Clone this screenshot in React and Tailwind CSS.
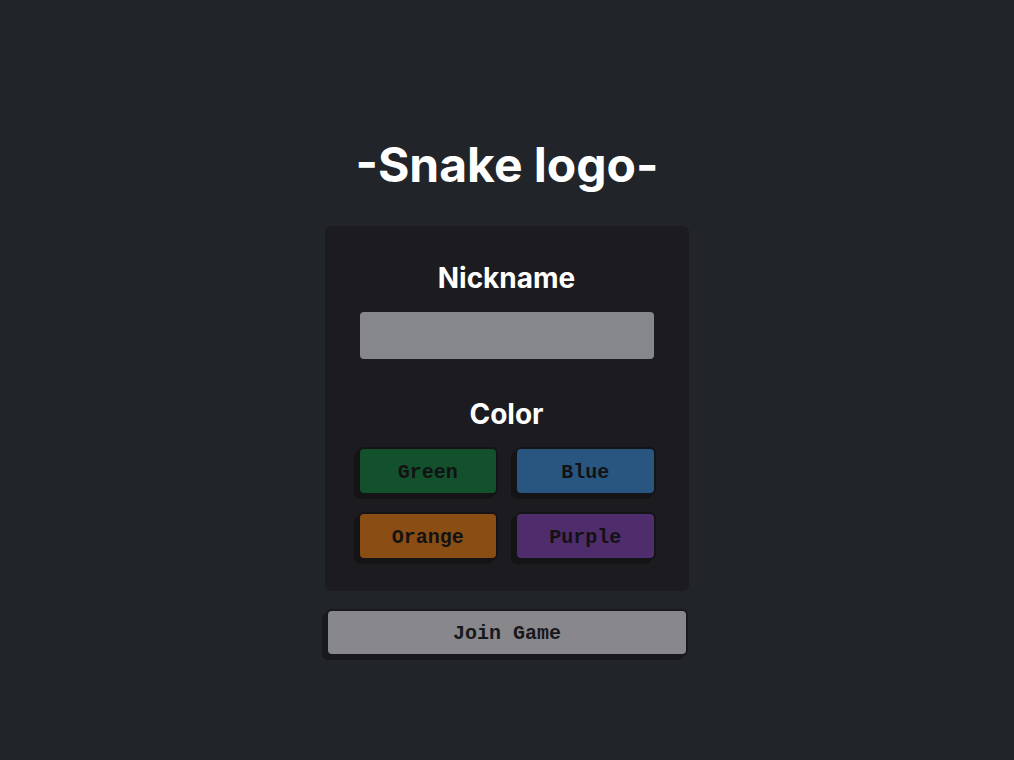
import React, { useState } from 'react'

const COLORS = [
  { name: 'Green', bg: 'bg-[#13502c]' },
  { name: 'Blue', bg: 'bg-[#285680]' },
  { name: 'Orange', bg: 'bg-[#8a4e14]' },
  { name: 'Purple', bg: 'bg-[#4f2c6b]' },
]

const mono = { fontFamily: '"Courier New", "Liberation Mono", monospace' }

export default function App() {
  const [nickname, setNickname] = useState('')
  const [color, setColor] = useState(null)

  return (
    <div
      className="min-h-screen w-full bg-[#212428] flex flex-col items-center pt-[141px]"
      style={{ fontFamily: 'Inter, "Noto Sans", sans-serif' }}
    >
      <h1 className="text-white text-[48px] leading-[48px] font-bold">-Snake logo-</h1>

      <div className="mt-[37px] mr-[1px] w-[364px] bg-[#1c1c20] rounded-md pt-[36px] pb-[33px] px-[35px] flex flex-col items-center">
        <h2 className="text-white text-[28px] leading-[32px] font-bold">Nickname</h2>
        <input
          value={nickname}
          onChange={(e) => setNickname(e.target.value)}
          className="mt-[18px] w-full h-[47px] rounded bg-[#86878b] outline-none px-3"
        />

        <h2 className="mt-[39px] text-white text-[28px] leading-[32px] font-bold">Color</h2>
        <div className="mt-[19px] w-full grid grid-cols-2 gap-[21px]">
          {COLORS.map((c) => (
            <button
              key={c.name}
              onClick={() => setColor(c.name)}
              className={`h-[44px] pt-[3px] rounded ${c.bg} text-[#121214] text-[20px] font-bold shadow-[0_0_0_2px_#141417,-4px_4px_0_2px_#141417]`}
              style={mono}
            >
              {c.name}
            </button>
          ))}
        </div>
      </div>

      <button
        className="mt-[20px] w-[358px] h-[43px] pt-[3px] rounded bg-[#87878c] text-[#18181a] text-[20px] font-bold shadow-[0_0_0_2px_#18191c,-4px_4px_0_2px_#18191c]"
        style={mono}
      >
        Join Game
      </button>
    </div>
  )
}
